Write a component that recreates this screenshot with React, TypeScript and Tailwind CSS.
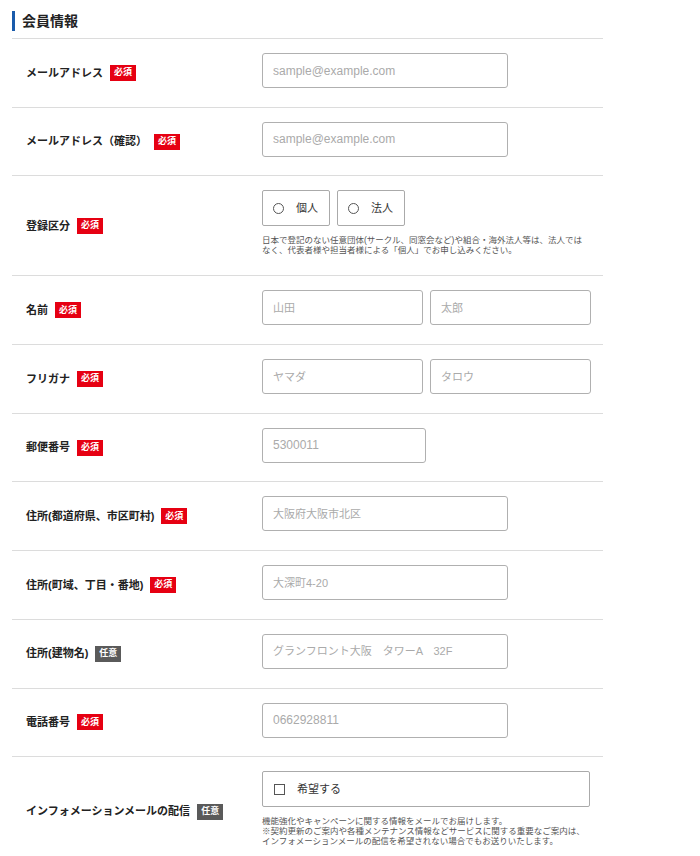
import React from "react";

const Badge = ({ req }: { req: boolean }) =>
  req ? (
    <span className="ml-[7px] inline-flex h-[16px] items-center bg-[#e60012] px-[4px] text-[9px] font-bold leading-none text-white">
      必須
    </span>
  ) : (
    <span className="ml-[7px] inline-flex h-[16px] items-center bg-[#5a5a5a] px-[4px] text-[9px] font-bold leading-none text-white">
      任意
    </span>
  );

const Row = ({
  label,
  req,
  children,
}: {
  label: string;
  req: boolean;
  children: React.ReactNode;
}) => (
  <div className="flex items-center border-b border-[#dcdcdc]">
    <div className="flex w-[250px] shrink-0 items-center pl-[14px] text-[11px] font-bold text-[#222]">
      <span>{label}</span>
      <Badge req={req} />
    </div>
    <div className="pt-[14px] pb-[18.7px]">{children}</div>
  </div>
);

const Input = ({ ph, w, jp }: { ph: string; w: string; jp?: boolean }) => (
  <input
    readOnly
    placeholder={ph}
    className={
      (jp ? "text-[11px] " : "text-[12px] ") +
      w +
      " h-[35px] rounded-[3px] border border-[#b0b0b0] bg-white px-[10px] text-[#333] outline-none placeholder:text-[#aaa]"
    }
  />
);

export default function App() {
  return (
    <div className="min-h-[856px] bg-white font-['Liberation_Sans','Noto_Sans_CJK_JP',sans-serif]">
      <div className="ml-[12px] w-[591px]">
        <div className="border-b border-[#dcdcdc] pt-[11px] pb-[7px]">
          <div className="flex h-[20px] items-center border-l-[3px] border-[#1a5bab] pl-[7px] text-[14px] font-bold text-[#222]">
            会員情報
          </div>
        </div>

        <Row label="メールアドレス" req>
          <Input ph="sample@example.com" w="w-[246px]" />
        </Row>
        <Row label="メールアドレス（確認）" req>
          <Input ph="sample@example.com" w="w-[246px]" />
        </Row>

        <div className="flex items-center border-b border-[#dcdcdc]">
          <div className="flex w-[250px] shrink-0 items-center pl-[14px] text-[11px] font-bold text-[#222]">
            <span>登録区分</span>
            <Badge req />
          </div>
          <div className="pt-[14px] pb-[20px]">
            <div className="flex gap-[7px]">
              {["個人", "法人"].map((t) => (
                <div
                  key={t}
                  className="flex h-[36px] w-[68px] items-center rounded-[2px] border border-[#aaa] pl-[10px] text-[11px] text-[#333]"
                >
                  <span className="box-border h-[11px] w-[11px] rounded-full border border-[#555]" />
                  <span className="ml-[12px]">{t}</span>
                </div>
              ))}
            </div>
            <p className="mt-[9px] text-[8.5px] leading-[10px] text-[#555]">
              日本で登記のない任意団体(サークル、同窓会など)や組合・海外法人等は、法人では
              <br />
              なく、代表者様や担当者様による「個人」でお申し込みください。
            </p>
          </div>
        </div>

        <Row label="名前" req>
          <div className="flex gap-[7px]">
            <Input ph="山田" w="w-[161px]" jp />
            <Input ph="太郎" w="w-[161px]" jp />
          </div>
        </Row>
        <Row label="フリガナ" req>
          <div className="flex gap-[7px]">
            <Input ph="ヤマダ" w="w-[161px]" jp />
            <Input ph="タロウ" w="w-[161px]" jp />
          </div>
        </Row>
        <Row label="郵便番号" req>
          <Input ph="5300011" w="w-[164px]" />
        </Row>
        <Row label="住所(都道府県、市区町村)" req>
          <Input ph="大阪府大阪市北区" w="w-[246px]" jp />
        </Row>
        <Row label="住所(町域、丁目・番地)" req>
          <Input ph="大深町4-20" w="w-[246px]" jp />
        </Row>
        <Row label="住所(建物名)" req={false}>
          <Input ph="グランフロント大阪　タワーA　32F" w="w-[246px]" jp />
        </Row>
        <Row label="電話番号" req>
          <Input ph="0662928811" w="w-[246px]" />
        </Row>

        <div className="flex items-center">
          <div className="flex w-[250px] shrink-0 items-center pl-[14px] text-[11px] font-bold text-[#222]">
            <span>インフォメーションメールの配信</span>
            <Badge req={false} />
          </div>
          <div className="pt-[14px] pb-[20px]">
            <div className="flex h-[36px] w-[328px] items-center rounded-[2px] border border-[#aaa] pl-[11px] text-[11px] text-[#333]">
              <span className="box-border h-[11px] w-[11px] border border-[#555]" />
              <span className="ml-[12px]">希望する</span>
            </div>
            <p className="mt-[9px] text-[8.5px] leading-[10px] text-[#555]">
              機能強化やキャンペーンに関する情報をメールでお届けします。
              <br />
              ※契約更新のご案内や各種メンテナンス情報などサービスに関する重要なご案内は、
              <br />
              インフォメーションメールの配信を希望されない場合でもお送りいたします。
            </p>
          </div>
        </div>
      </div>
    </div>
  );
}
